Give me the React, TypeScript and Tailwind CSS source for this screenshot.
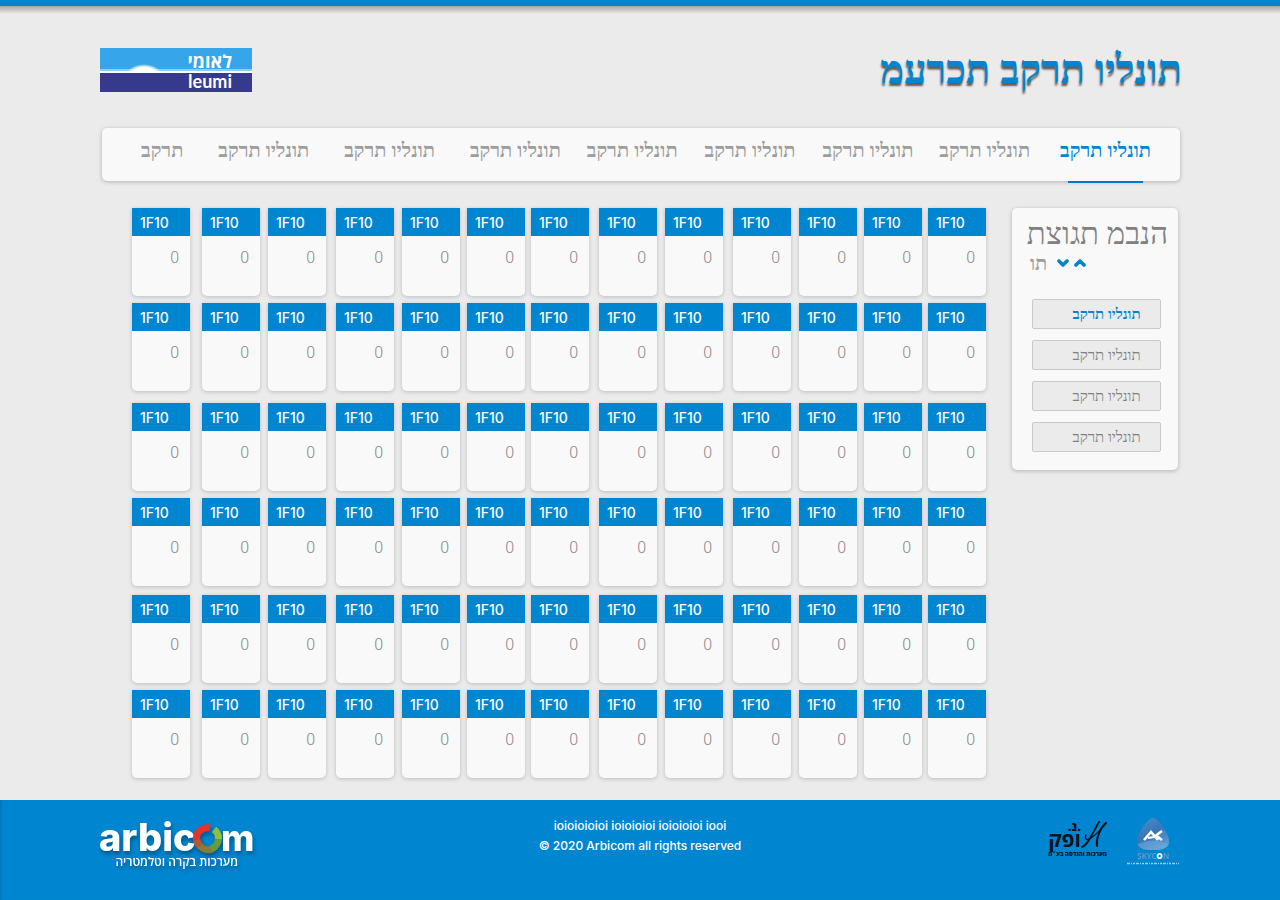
import React from "react";
import { FaChevronDown, FaChevronUp } from "react-icons/fa";

const tabs = [
  "תונליו תרקב",
  "תונליו תרקב",
  "תונליו תרקב",
  "תונליו תרקב",
  "תונליו תרקב",
  "תונליו תרקב",
  "תונליו תרקב",
  "תונליו תרקב",
  "תרקב",
];

const views = ["תונליו תרקב", "תונליו תרקב", "תונליו תרקב", "תונליו תרקב"];

const cells = Array.from({ length: 6 * 13 }, (_, id) => ({ id, label: "1F10", value: 0 }));

function LeumiLogo() {
  return (
    <svg width="152" height="44" viewBox="0 0 152 44" role="img" aria-label="leumi">
      <defs>
        <radialGradient id="sun" cx="0.5" cy="0.5" r="0.5">
          <stop offset="0.65" stopColor="#fff" />
          <stop offset="1" stopColor="#fff" stopOpacity="0" />
        </radialGradient>
        <clipPath id="sky">
          <rect width="152" height="25" />
        </clipPath>
      </defs>
      <rect width="152" height="44" fill="#36a5e9" />
      <ellipse cx="44" cy="25" rx="17" ry="9" fill="url(#sun)" clipPath="url(#sky)" />
      <rect y="21" width="152" height="2" fill="#fff" opacity="0.45" />
      <rect y="23" width="152" height="2" fill="#fff" />
      <rect y="25" width="152" height="19" fill="#373a8c" />
      <text x="132" y="20" textAnchor="end" fill="#fff" fontSize="18" fontWeight="700" className="font-['Open_Sans',sans-serif]">לאומי</text>
      <text x="132" y="40" textAnchor="end" fill="#fff" fontSize="18" fontWeight="700" className="font-[Lato,sans-serif]">leumi</text>
    </svg>
  );
}

function ArbicomLogo() {
  return (
    <svg width="160" height="54" viewBox="0 0 160 54" role="img" aria-label="arbicom" className="overflow-visible drop-shadow-[1px_3px_2px_rgba(0,0,0,0.35)]">
      <g fill="#fff" fontWeight="800" className="font-[Inter,sans-serif]">
        <text x="-1" y="33" fontSize="38">arbic</text>
        <text x="121" y="33" fontSize="36">m</text>
      </g>
      <g fill="none" strokeWidth="7">
        <path d="M97 24 A11 11 0 0 1 110 10" stroke="#e2342c" />
        <path d="M97 22 A11 11 0 0 0 101 29" stroke="#b5582f" />
        <path d="M100 28 A11 11 0 0 0 112 31" stroke="#8a7a37" />
        <path d="M111 31 A11 11 0 0 0 118 18" stroke="#639c40" />
        <path d="M118.500 21 A11 11 0 0 0 114 11.500" stroke="#8fbf3f" />
      </g>
      <text x="138" y="48" textAnchor="start" direction="rtl" fill="#fff" fontSize="12" fontWeight="600" className="font-['Open_Sans',sans-serif]">מערכות בקרה וטלמטריה</text>
    </svg>
  );
}

function OfekLogo() {
  return (
    <svg width="60" height="38" viewBox="0 0 60 38" role="img" aria-label="אופק" className="overflow-visible">
      <g fill="#07131c" className="font-['Open_Sans',sans-serif]" direction="rtl">
        <text x="33" y="27" fontSize="21" fontWeight="700">ופק</text>
        <text x="33" y="11" fontSize="13" fontWeight="800">.נ.</text>
        <text x="59" y="36" fontSize="6" fontWeight="800">מערכות והנדסה בע״מ</text>
      </g>
      <g fill="none" stroke="#07131c" strokeLinecap="round">
        <path d="M34 27 C40 25 45 12 51 2" strokeWidth="1.800" />
        <path d="M38 15 C36 19 39 21 43 18 C49 14 54 8 58 3" strokeWidth="1.200" />
        <path d="M58 3 C52 8 48 18 49 26" strokeWidth="2" />
      </g>
    </svg>
  );
}

function SkyconLogo() {
  return (
    <svg width="54" height="50" viewBox="0 0 54 50" role="img" aria-label="SKYCON">
      <defs>
        <linearGradient id="badge" x1="0" y1="0" x2="0.6" y2="1">
          <stop offset="0" stopColor="#4a93cf" />
          <stop offset="0.55" stopColor="#3a75b5" />
          <stop offset="1" stopColor="#5b9bd4" />
        </linearGradient>
      </defs>
      <path d="M27 1 C34 2 43 18 43 25 C43 32 35 33 27 33 C19 33 11 32 11 25 C11 18 20 2 27 1 Z" fill="url(#badge)" />
      <path d="M12 27 Q27 20 42 27 C41 32 34 33 27 33 C19 33 13 32 12 27 Z" fill="#7eb5e2" opacity="0.4" />
      <g fill="none" stroke="#fff" strokeWidth="2.600">
        <path d="M18 23 L25 15 L32 23" />
        <path d="M22 21 L28 20" strokeWidth="2" />
        <path d="M36 14 L30 18.500 L36 23" />
      </g>
      <text x="27" y="42" textAnchor="middle" fontSize="8" fill="#6a9cc4" fontWeight="600" className="font-['Open_Sans',sans-serif]">
        SKYC<tspan fill="#fff" fontWeight="800">O</tspan>N
      </text>
      <path d="M1 46.500 H53" stroke="#9ecbe8" strokeWidth="1.500" strokeDasharray="3 1 1 1 2 1" />
    </svg>
  );
}

export default function App() {
  return (
    <div className="flex min-h-screen flex-col border-t-[6px] border-[#0086d1] bg-[#ebebeb] font-['Liberation_Serif',serif]">
      <div className="h-2 bg-linear-to-b from-[#a9a6a4] to-[#ebebeb]" />

      <header className="flex h-[114px] items-start justify-between pt-[34px] pr-[98px] pl-[100px]">
        <a href="#home">
          <LeumiLogo />
        </a>
        <h1 dir="rtl" className="text-[40px] leading-[44px] font-semibold text-[#0086d1] [text-shadow:0_3px_2px_rgba(80,65,55,0.85)]">
          תונליו תרקב תכרעמ
        </h1>
      </header>

      <nav dir="rtl" className="mr-[100px] ml-[102px] rounded-[5px] bg-[#f9f9f9] pr-[29px] pl-[39px] shadow-[0_1px_4px_rgba(0,0,0,0.25)]">
        <ul className="grid grid-cols-[121fr_117fr_118fr_118fr_117fr_126fr_126fr_126fr_41fr]">
          {tabs.map((tab, i) => (
            <li key={i} className="h-[53px] pt-[10px]">
              <a
                href="#tab"
                className={
                  i === 0
                    ? "relative inline-block h-[45px] text-[20px] leading-6 font-bold whitespace-nowrap text-[#0086d1]"
                    : "inline-block text-[20px] leading-6 font-bold whitespace-nowrap text-[#9d9d9d]"
                }
              >
                {tab}
                {i === 0 && <span className="absolute inset-x-2 bottom-0 h-0.5 bg-[#0079c4]" />}
              </a>
            </li>
          ))}
        </ul>
      </nav>

      <main className="flex flex-1 items-start gap-[26px] pt-[27px] pr-[102px] pb-[22px] pl-[132px]">
        <div className="grid flex-1 grid-cols-[70fr_66fr_68fr_66fr_65fr_64fr_68fr_66fr_68fr_66fr_65fr_64fr_58fr] grid-rows-[95px_100px_95px_97px_95px_88px]">
          {cells.map((cell) => (
            <section key={cell.id} className="h-[88px] w-[58px] overflow-hidden rounded-b-[5px] bg-[#f9f9f9] shadow-[0_1px_4px_rgba(0,0,0,0.2)]">
              <h2 className="h-7 bg-[#0086d1] pl-2 font-[Inter,sans-serif] text-[14px] leading-[30px] font-medium text-white">
                {cell.label}
              </h2>
              <p className="pt-3 pr-[11px] text-right font-[Roboto,sans-serif] text-[16px] leading-5 font-light text-[#888888]">{cell.value}</p>
            </section>
          ))}
        </div>

        <aside className="h-[262px] w-[166px] shrink-0 rounded-[5px] bg-[#f9f9f9] shadow-[0_1px_4px_rgba(0,0,0,0.25)]">
          <h2 dir="rtl" className="pt-2 pr-[10px] text-[31px] leading-9 whitespace-nowrap text-[#808080]">
            הנבמ תגוצת
          </h2>
          <div className="flex h-[22px] items-center pl-[18px]">
            <span dir="rtl" className="text-[20px] leading-[22px] font-semibold text-[#9d9d9d]">תו</span>
            <button type="button" aria-label="למטה" className="ml-[10px] text-[#0086c8]">
              <FaChevronDown size={12} stroke="currentColor" strokeWidth={70} />
            </button>
            <button type="button" aria-label="למעלה" className="ml-[5px] text-[#0086c8]">
              <FaChevronUp size={12} stroke="currentColor" strokeWidth={70} />
            </button>
          </div>
          <div className="mt-[25px] flex flex-col gap-[11px] pr-[17px] pl-5">
            {views.map((view, i) => (
              <button
                key={i}
                type="button"
                dir="rtl"
                className={
                  i === 0
                    ? "h-[30px] rounded-xs border border-[#c9c9c9] bg-[#ebebeb] pl-5 text-[15px] font-bold text-[#0086d1]"
                    : "h-[30px] rounded-xs border border-[#c9c9c9] bg-[#ebebeb] pl-5 text-[15px] text-[#808080]"
                }
              >
                {view}
              </button>
            ))}
          </div>
        </aside>
      </main>

      <footer className="grid h-[100px] grid-cols-3 items-start bg-[#0086d1] px-[100px] shadow-[inset_2px_0_2px_rgba(0,0,0,0.1)]">
        <div className="pt-[18px]">
          <ArbicomLogo />
        </div>
        <div className="pt-4 text-center font-[Inter,sans-serif] text-[12px] leading-5 font-medium text-white">
          <p>ioioioioioi ioioioioi ioioioioi iooi</p>
          <p>© 2020 Arbicom all rights reserved</p>
        </div>
        <div className="flex items-start justify-end gap-[18px] pt-[17px]">
          <div className="pt-[3px]">
            <OfekLogo />
          </div>
          <SkyconLogo />
        </div>
      </footer>
    </div>
  );
}
